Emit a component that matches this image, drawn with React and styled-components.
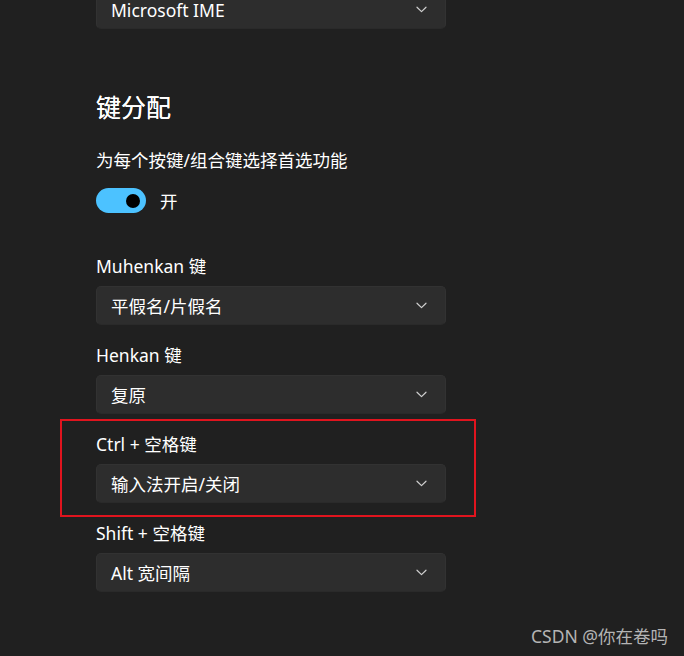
import React from "react";
import styled, { createGlobalStyle } from "styled-components";

const Global = createGlobalStyle`
  html, body { margin: 0; padding: 0; background: #202020; }
  body {
    width: 684px; height: 656px; overflow: hidden;
    font-family: "Segoe UI", "Noto Sans", "Noto Sans CJK SC", sans-serif;
    color: #ffffff;
  }
`;

const Page = styled.div`
  position: relative;
  width: 684px;
  height: 656px;
  overflow: hidden;
  padding-left: 96px;
  box-sizing: border-box;
`;

const Column = styled.div`
  width: 350px;
  display: flex;
  flex-direction: column;
`;

const SelectBox = styled.div`
  height: 39px;
  box-sizing: border-box;
  background: #2d2d2d;
  border: 1px solid #323232;
  border-bottom-color: #2a2a2a;
  border-radius: 5px;
  display: flex;
  align-items: center;
  justify-content: space-between;
  padding: 0 18px 0 14px;
  font-size: 17.5px;
  color: #ffffff;
  margin-top: ${(p) => p.$offset || 0}px;
`;

const Heading = styled.h2`
  margin: 61px 0 0;
  font-size: 25px;
  line-height: 34px;
  font-weight: 400;
  text-shadow: 0 0 0.4px #ffffff;
`;

const Text = styled.div`
  font-size: 17.5px;
  line-height: 24px;
  margin-top: ${(p) => p.$mt || 0}px;
`;

const ToggleRow = styled.div`
  display: flex;
  align-items: center;
  gap: 14px;
  margin-top: 16px;
  font-size: 17.5px;
`;

const Toggle = styled.div`
  width: 50px;
  height: 25px;
  border-radius: 13px;
  background: #4cc2ff;
  display: flex;
  align-items: center;
  justify-content: flex-end;
  padding-right: 6px;
  box-sizing: border-box;
`;

const Knob = styled.div`
  width: 14px;
  height: 14px;
  border-radius: 50%;
  background: #000000;
`;

const Group = styled.div`
  position: relative;
  display: flex;
  flex-direction: column;
  gap: 8px;
  margin-top: ${(p) => p.$mt}px;
`;

const Highlight = styled.div`
  position: absolute;
  left: -36px;
  right: -30px;
  top: -13px;
  bottom: -14px;
  border: 2px solid #e0141e;
  pointer-events: none;
`;

const Watermark = styled.div`
  position: absolute;
  right: 16px;
  bottom: 8px;
  font-size: 17.5px;
  color: #b4b4b4;
  font-family: "Noto Sans", "Noto Sans CJK SC", sans-serif;
`;

const Chevron = () => (
  <svg width="11" height="7" viewBox="0 0 11 7" fill="none">
    <path d="M1 1.2 L5.5 5.6 L10 1.2" stroke="#cfcfcf" strokeWidth="1.2" strokeLinecap="round" strokeLinejoin="round" />
  </svg>
);

const Select = ({ value, offset }) => (
  <SelectBox $offset={offset}>
    <span>{value}</span>
    <Chevron />
  </SelectBox>
);

const groups = [
  { label: "Muhenkan 键", value: "平假名/片假名", mt: 41 },
  { label: "Henkan 键", value: "复原", mt: 18 },
  { label: "Ctrl + 空格键", value: "输入法开启/关闭", mt: 18, hl: true },
  { label: "Shift + 空格键", value: "Alt 宽间隔", mt: 18 },
];

export default function App() {
  return (
    <>
      <Global />
      <Page>
        <Column>
          <Select value="Microsoft IME" offset={-10} />
          <Heading>键分配</Heading>
          <Text $mt={24}>为每个按键/组合键选择首选功能</Text>
          <ToggleRow>
            <Toggle><Knob /></Toggle>
            <span>开</span>
          </ToggleRow>
          {groups.map((g) => (
            <Group key={g.label} $mt={g.mt}>
              {g.hl && <Highlight />}
              <Text>{g.label}</Text>
              <Select value={g.value} />
            </Group>
          ))}
        </Column>
        <Watermark>CSDN @你在卷吗</Watermark>
      </Page>
    </>
  );
}
